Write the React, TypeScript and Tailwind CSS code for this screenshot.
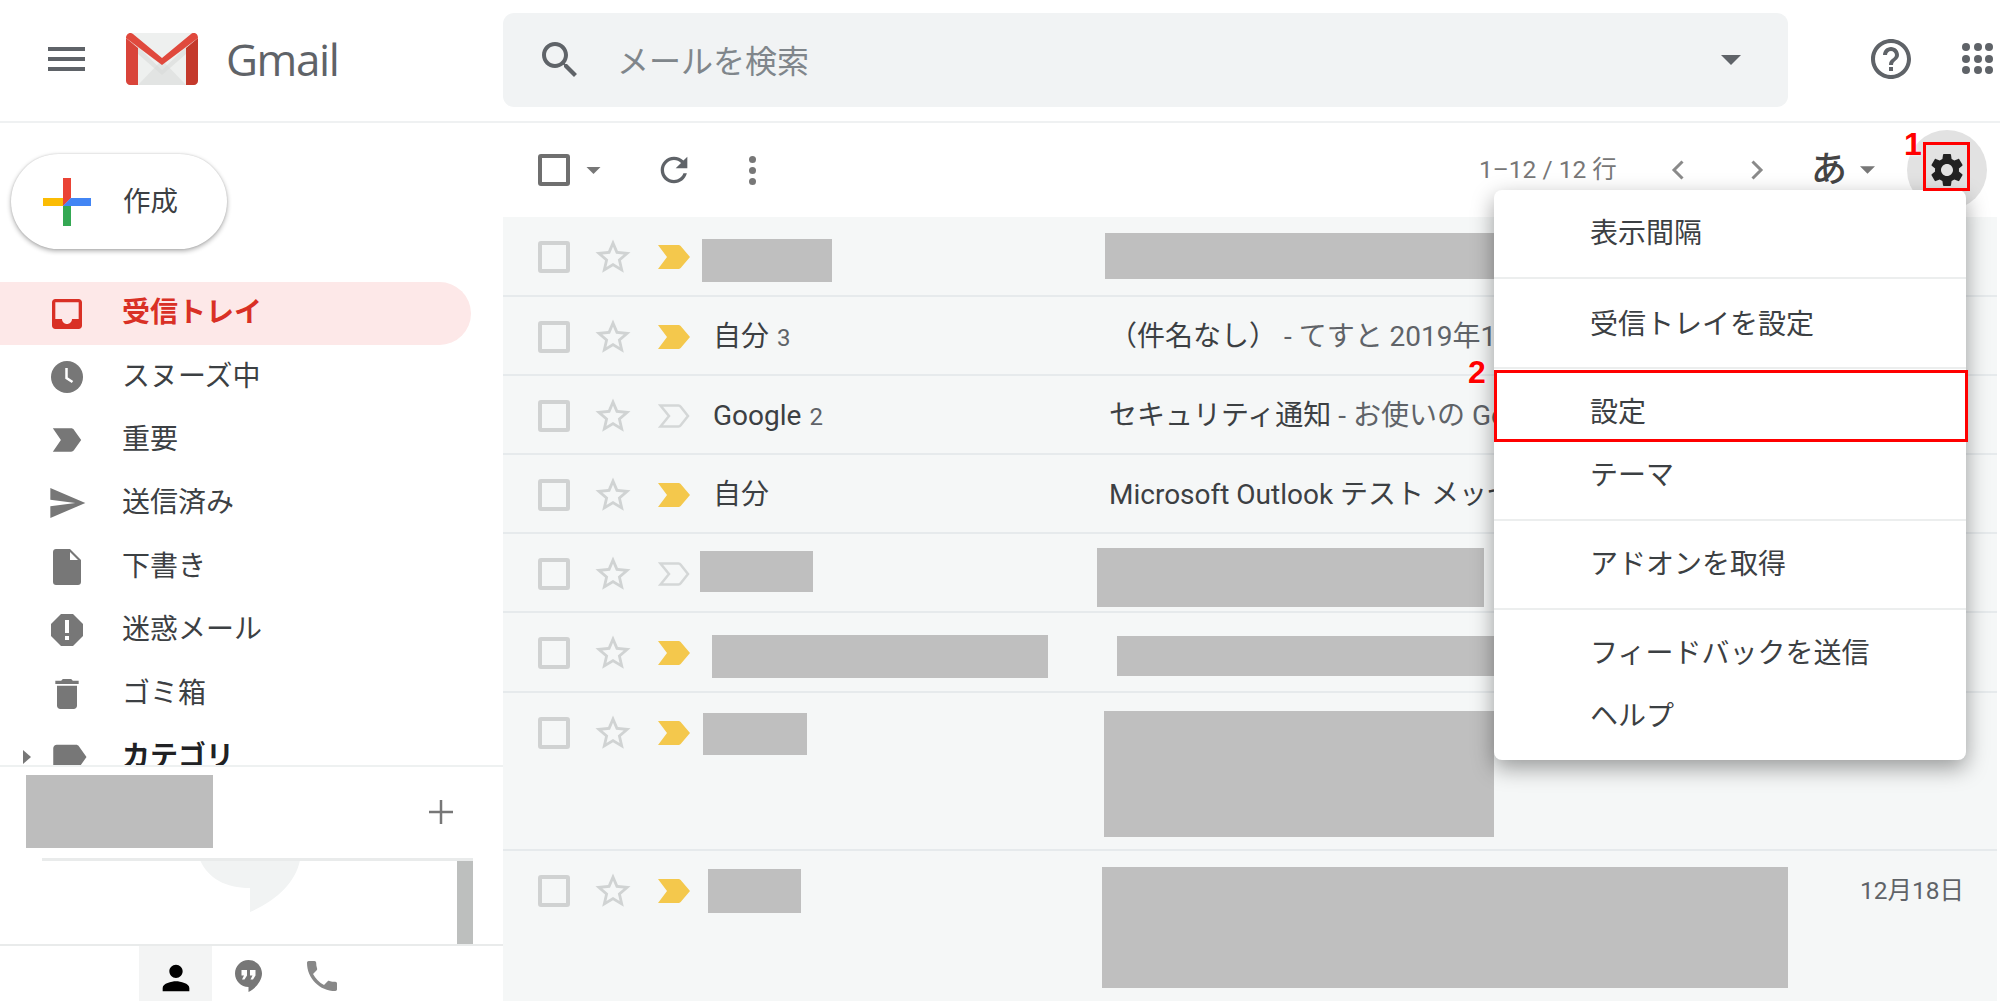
const font = "font-['Roboto','Noto_Sans_CJK_JP',sans-serif]";

function Icon({ d, className }: { d: string; className?: string }) {
  return (
    <svg viewBox="0 0 24 24" fill="currentColor" className={className}>
      <path d={d} />
    </svg>
  );
}

const paths = {
  inbox: 'M19 3H4.99c-1.11 0-1.98.89-1.98 2L3 19c0 1.1.88 2 1.99 2H19c1.1 0 2-.9 2-2V5c0-1.11-.9-2-2-2zm0 12h-4c0 1.66-1.35 3-3 3s-3-1.34-3-3H4.99V5H19v10z',
  important: 'M3.5 18.99l11 .01c.67 0 1.27-.33 1.63-.84L20.5 12l-4.37-6.16c-.36-.51-.96-.84-1.63-.84l-11 .01L8.34 12 3.5 18.99z',
  send: 'M2.01 21L23 12 2.01 3 2 10l15 2-15 2z',
  trash: 'M6 19c0 1.1.9 2 2 2h8c1.1 0 2-.9 2-2V7H6v12zM19 4h-3.5l-1-1h-5l-1 1H5v2h14V4z',
  label: 'M17.63 5.84C17.27 5.33 16.67 5 16 5L5 5.01C3.9 5.01 3 5.9 3 7v10c0 1.1.9 1.99 2 1.99L16 19c.67 0 1.27-.33 1.63-.84L22 12l-4.37-6.16z',
  person: 'M12 12c2.21 0 4-1.79 4-4s-1.79-4-4-4-4 1.79-4 4 1.79 4 4 4zm0 2c-2.67 0-8 1.34-8 4v2h16v-2c0-2.66-5.33-4-8-4z',
  phone: 'M6.62 10.79c1.44 2.83 3.76 5.14 6.59 6.59l2.2-2.2c.27-.27.67-.36 1.02-.24 1.12.37 2.33.57 3.57.57.55 0 1 .45 1 1V20c0 .55-.45 1-1 1-9.39 0-17-7.61-17-17 0-.55.45-1 1-1h3.5c.55 0 1 .45 1 1 0 1.25.2 2.45.57 3.57.11.35.03.74-.25 1.02l-2.2 2.2z',
  gear: 'M19.14 12.94c.04-.3.06-.61.06-.94 0-.32-.02-.64-.07-.94l2.03-1.58c.18-.14.23-.41.12-.61l-1.92-3.32c-.12-.22-.37-.29-.59-.22l-2.39.96c-.5-.38-1.03-.7-1.62-.94l-.36-2.54c-.04-.24-.24-.41-.48-.41h-3.84c-.24 0-.43.17-.47.41l-.36 2.54c-.59.24-1.13.57-1.62.94l-2.39-.96c-.22-.08-.47 0-.59.22L2.74 8.87c-.12.21-.08.47.12.61l2.03 1.58c-.05.3-.09.63-.09.94s.02.64.07.94l-2.03 1.58c-.18.14-.23.41-.12.61l1.92 3.32c.12.22.37.29.59.22l2.39-.96c.5.38 1.03.7 1.62.94l.36 2.54c.05.24.24.41.48.41h3.84c.24 0 .44-.17.47-.41l.36-2.54c.59-.24 1.13-.56 1.62-.94l2.39.96c.22.08.47 0 .59-.22l1.92-3.32c.12-.22.07-.47-.12-.61l-2.01-1.58zM12 15.6c-1.98 0-3.6-1.62-3.6-3.6s1.62-3.6 3.6-3.6 3.6 1.62 3.6 3.6-1.62 3.6-3.6 3.6z',
  refresh: 'M17.65 6.35C16.2 4.9 14.21 4 12 4c-4.42 0-7.99 3.58-7.99 8s3.57 8 7.99 8c3.73 0 6.84-2.55 7.73-6h-2.08c-.82 2.33-3.04 4-5.65 4-3.31 0-6-2.69-6-6s2.69-6 6-6c1.66 0 3.14.69 4.22 1.78L13 11h7V4l-2.35 2.35z',
  search: 'M15.5 14h-.79l-.28-.27C15.41 12.59 16 11.11 16 9.5 16 5.91 13.09 3 9.5 3S3 5.91 3 9.5 5.91 16 9.5 16c1.61 0 3.09-.59 4.23-1.57l.27.28v.79l5 4.99L20.49 19l-4.99-5zm-6 0C7.01 14 5 11.99 5 9.5S7.01 5 9.5 5 14 7.01 14 9.5 11.99 14 9.5 14z',
  help: 'M11 18h2v-2h-2v2zm1-16C6.48 2 2 6.48 2 12s4.48 10 10 10 10-4.48 10-10S17.52 2 12 2zm0 18c-4.41 0-8-3.59-8-8s3.59-8 8-8 8 3.59 8 8-3.59 8-8 8zm0-14c-2.21 0-4 1.79-4 4h2c0-1.1.9-2 2-2s2 .9 2 2c0 2-3 1.75-3 5h2c0-2.25 3-2.5 3-5 0-2.21-1.79-4-4-4z',
  star: 'M22 9.24l-7.19-.62L12 2 9.19 8.63 2 9.24l5.46 4.73L5.82 21 12 17.27 18.18 21l-1.63-7.03L22 9.24zM12 15.4l-3.76 2.27 1-4.28-3.32-2.88 4.38-.38L12 6.1l1.71 4.04 4.38.38-3.32 2.88 1 4.28L12 15.4z',
};

function Caret({ className }: { className: string }) {
  return (
    <svg viewBox="0 0 10 5" fill="currentColor" className={className}>
      <path d="M0 0h10L5 5z" />
    </svg>
  );
}

function GmailLogo() {
  return (
    <svg viewBox="0 0 72 52" className="h-[52px] w-[72px]">
      <rect x="2" y="0" width="68" height="52" rx="3" fill="#eef0ef" />
      <path d="M12 52 36 27l24 25z" fill="#e2e4e3" />
      <path d="M12 14 36 37l24-23v7L36 42 12 21z" fill="#d9dad9" opacity="0.6" />
      <path d="M0 5c0-4 4-6.500 7-4l29 24L65 1c3-2.500 7-.5 7 4L36 32z" fill="#e0493d" />
      <path d="M0 5l12 10v37H4c-2 0-4-2-4-4z" fill="#d9443a" />
      <path d="M72 5 60 15v37h8c2 0 4-2 4-4z" fill="#c4392b" />
    </svg>
  );
}

function ComposePlus() {
  return (
    <svg viewBox="0 0 48 48" className="h-12 w-12">
      <path d="M20 0h8v20l-8 0z" fill="#ea4335" />
      <path d="M28 20h20v8H20z" fill="#4285f4" />
      <path d="M20 28h8v20h-8z" fill="#34a853" />
      <path d="M0 20h20v8H0z" fill="#fbbc04" />
      <path d="M20 20h8l-8 8z" fill="#ea4335" />
      <path d="M28 20v8h-8z" fill="#4285f4" />
    </svg>
  );
}

const navItems = [
  { label: 'スヌーズ中', icon: <svg viewBox="0 0 32 32" className="h-8 w-8"><circle cx="16" cy="16" r="16" fill="#777" /><path d="M15.500 7v10l6 4" fill="none" stroke="#fff" strokeWidth="2.500" /></svg> },
  { label: '重要', icon: <Icon d={paths.important} className="h-10 w-10 shrink-0 text-[#777]" /> },
  { label: '送信済み', icon: <Icon d={paths.send} className="h-10 w-10 shrink-0 text-[#777]" /> },
  { label: '下書き', icon: <svg viewBox="0 0 32 36" className="h-9 w-8"><path d="M6 0h13l11 11v22c0 1.700-1.300 3-3 3H5c-1.700 0-3-1.300-3-3V3c0-1.700 1.300-3 3-3z" fill="#777" /><path d="M19 3v8h8z" fill="#fff" /></svg> },
  { label: '迷惑メール', icon: <svg viewBox="0 0 32 32" className="h-8 w-8"><path d="M10 0h12l10 10v12L22 32H10L0 22V10z" fill="#777" /><path d="M14 6h4v13h-4zM14 22h4v4h-4z" fill="#fff" /></svg> },
  { label: 'ゴミ箱', icon: <Icon d={paths.trash} className="h-10 w-10 shrink-0 text-[#777]" /> },
];

const rows = [
  {
    h: 'h-[80px] border-b-2',
    boxes: ['left-[199px] top-[22px] h-[43px] w-[130px]', 'left-[602px] top-[16px] h-[46px] w-[400px]'],
    important: true,
  },
  { h: 'h-[79px] border-b-2', important: true, sender: '自分', count: '3', subject: '（件名なし）', snippet: ' - てすと 2019年12月' },
  { h: 'h-[79px] border-b-2', important: false, sender: 'Google', count: '2', subject: 'セキュリティ通知', snippet: ' - お使いの Google' },
  { h: 'h-[79px] border-b-2', important: true, sender: '自分', subject: 'Microsoft Outlook テスト メッセージ' },
  {
    h: 'h-[79px] border-b-2',
    boxes: ['left-[197px] top-[17px] h-[41px] w-[113px]', 'left-[594px] top-[14px] h-[59px] w-[387px]'],
    important: false,
  },
  {
    h: 'h-[80px] border-b-2',
    boxes: ['left-[209px] top-[22px] h-[43px] w-[336px]', 'left-[614px] top-[23px] h-[40px] w-[400px]'],
    important: true,
  },
  {
    h: 'h-[158px] border-b-2',
    boxes: ['left-[200px] top-[20px] h-[42px] w-[104px]', 'left-[601px] top-[18px] h-[126px] w-[390px]'],
    important: true,
  },
  {
    h: 'flex-1',
    boxes: ['left-[205px] top-[18px] h-[44px] w-[93px]', 'left-[599px] top-[16px] h-[121px] w-[686px]'],
    important: true,
    date: '12月18日',
  },
];

const menuGroups = [
  { cls: 'pt-[12px] pb-[12px]', items: ['表示間隔'] },
  { cls: 'pt-[14px] pb-[11px]', items: ['受信トレイを設定'] },
  { cls: 'pt-[12px] pb-[12px]', items: ['設定', 'テーマ'] },
  { cls: 'pt-[12px] pb-[12px]', items: ['アドオンを取得'] },
  { cls: 'pt-[12px] pb-[12px]', items: ['フィードバックを送信', 'ヘルプ'] },
];

function Row({ row }: { row: (typeof rows)[number] }) {
  return (
    <div className={`relative flex shrink-0 items-start overflow-hidden border-[#e6eaec] bg-[#f5f7f7] pl-[35px] pt-6 ${row.h}`}>
      <div className="h-8 w-8 rounded-[3px] border-4 border-[#d0d2d2]" />
      <Icon d={paths.star} className="ml-[22px] h-[42px] w-[42px] -mt-[5px] text-[#d0d3d3]" />
      <div className="ml-[24px] h-8 w-8">
        <svg viewBox="0 0 32 24" className="mt-1 h-6 w-8">
          {row.important ? (
            <path d="M0 24 9 12 0 0h20c1.500 0 2.500.5 3.500 2L32 12l-8.500 10c-1 1.500-2 2-3.500 2z" fill="#f4c84c" />
          ) : (
            <path d="M2.500 22.500 11 12 2.500 1.500h18c1 0 1.600.4 2.200 1.200L30 12l-7.300 9.300c-.6.800-1.200 1.200-2.200 1.200z" fill="none" stroke="#d4d7d7" strokeWidth="2.500" />
          )}
        </svg>
      </div>
      <div className="ml-[23px] w-[396px] shrink-0 text-[28px] leading-8 text-[#3c4043]">
        {row.sender}
        {row.count && <span className="ml-2 text-[24px] text-[#5f6368]">{row.count}</span>}
      </div>
      <div className="min-w-0 flex-1 whitespace-nowrap text-[28px] leading-8 text-[#3c4043]">
        {row.subject}
        {row.snippet && <span className="text-[#5f6368]">{row.snippet}</span>}
      </div>
      {row.date && <span className="mr-[33px] text-[24.500px] leading-8 text-[#5f6368]">{row.date}</span>}
      {row.boxes?.map((box) => (
        <div key={box} className={`absolute bg-[#bfbfbf] ${box}`} />
      ))}
    </div>
  );
}

export default function App() {
  return (
    <div className={`relative flex h-screen w-full flex-col overflow-hidden bg-white ${font}`}>
      {/* Top bar */}
      <header className="flex h-[123px] shrink-0 items-start border-b-2 border-[#eff1f2]">
        <div className="flex w-[503px] shrink-0 items-center pt-[33px]">
          <div className="ml-12 flex h-[24px] w-[37px] flex-col justify-between">
            <span className="h-1 bg-[#5f6368]" />
            <span className="h-1 bg-[#5f6368]" />
            <span className="h-1 bg-[#5f6368]" />
          </div>
          <div className="ml-[41px]">
            <GmailLogo />
          </div>
          <span className="ml-[28px] font-['Open_Sans'] text-[44px] leading-[52px] tracking-[-1.400px] text-[#5f6368]">Gmail</span>
        </div>
        <div className="mt-[13px] flex h-[94px] w-[1285px] items-center rounded-[11px] bg-[#f1f3f4]">
          <Icon d={paths.search} className="ml-[33px] h-[48px] w-[48px] text-[#5f6368]" />
          <span className="ml-[33px] mt-1 text-[32px] text-[#80868b]">メールを検索</span>
          <Caret className="ml-auto mr-[47px] h-[10px] w-5 text-[#5f6368]" />
        </div>
        <Icon d={paths.help} className="ml-[79px] mt-[35px] h-[48px] w-[48px] text-[#5f6368]" />
        <div className="ml-[47px] mt-[43px] grid h-8 w-8 grid-cols-3 gap-[3px]">
          {Array.from({ length: 9 }).map((_, i) => (
            <span key={i} className="h-2 w-2 rounded-full bg-[#5f6368]" />
          ))}
        </div>
      </header>

      <div className="flex min-h-0 flex-1">
        {/* Left column */}
        <aside className="flex w-[503px] shrink-0 flex-col">
          <div className="min-h-0 flex-1 overflow-hidden">
            <div className="ml-[11px] mt-[31px] flex h-[95px] w-[216px] items-center rounded-full bg-white pl-8 shadow-[0_2px_5px_rgba(0,0,0,0.32),0_0_2px_rgba(0,0,0,0.15)]">
              <ComposePlus />
              <span className="ml-8 text-[27.500px] text-[#3c4043]">作成</span>
            </div>
            <nav className="mt-[33px]">
              <div className="flex h-[63px] w-[471px] items-center rounded-r-full bg-[#fde8e8] pl-[47px] text-[28px] font-bold text-[#d93025]">
                <Icon d={paths.inbox} className="h-10 w-10 text-[#d93025]" />
                <span className="ml-[35px] -mt-[2px]">受信トレイ</span>
              </div>
              {navItems.map((item) => (
                <div key={item.label} className="flex h-[63.400px] items-center text-[28px] text-[#3c4043]">
                  <span className="ml-[51px] flex w-8 justify-center">{item.icon}</span>
                  <span className="ml-[39px]">{item.label}</span>
                </div>
              ))}
              <div className="flex h-[63.400px] items-center text-[28px] font-bold text-[#202124]">
                <svg viewBox="0 0 8 14" className="ml-[23px] h-[14px] w-2 text-[#777]" fill="currentColor">
                  <path d="M0 0l8 7-8 7z" />
                </svg>
                <Icon d={paths.label} className="ml-[17px] h-[42px] w-[42px] text-[#777]" />
                <span className="ml-[32px]">カテゴリ</span>
              </div>
            </nav>
          </div>

          {/* Hangouts */}
          <div className="flex h-[179px] shrink-0 flex-col border-t-2 border-[#eef1f1]">
            <div className="flex h-[91px] items-start pl-[26px] pt-2">
              <div className="h-[73px] w-[187px] bg-[#bdbdbd]" />
              <svg viewBox="0 0 24 24" className="ml-[216px] mt-[25px] h-6 w-6 text-[#777]" fill="currentColor">
                <path d="M10.750 0h2.500v10.750H24v2.500H13.250V24h-2.500V13.250H0v-2.500h10.750z" />
              </svg>
            </div>
            <div className="relative ml-[42px] flex h-[86px] w-[431px] justify-end overflow-hidden border-t-[3px] border-[#e9ebeb]">
              <svg viewBox="0 0 100 52" className="absolute left-[158px] top-[-1px] h-[52px] w-[100px]">
                <path d="M0 0h100c-4 22-24 41-50 52V28C25 28 8 18 0 0z" fill="#f1f3f3" />
              </svg>
              <div className="w-4 bg-[#bdbfbe]" />
            </div>
          </div>
          <div className="flex h-[57px] shrink-0 border-t-2 border-[#e9ebeb] pl-[139px]">
            <div className="flex w-[73px] items-center justify-center bg-[#f3f4f4] pt-1">
              <Icon d={paths.person} className="mt-1 h-10 w-10 text-black" />
            </div>
            <div className="flex w-[73px] items-center justify-center pt-1">
              <svg viewBox="0 0 27 32" className="h-8 w-[27px]">
                <path d="M13.500 0C6 0 0 6 0 13.500S6 27 13.500 27v5C20 29 27 21 27 13.500 27 6 21 0 13.500 0z" fill="#777" />
                <path d="M6.500 10h5.500v5.500l-2.500 4H7l2-4H6.500zM15 10h5.500v5.500l-2.500 4h-2.500l2-4H15z" fill="#fff" />
              </svg>
            </div>
            <div className="flex w-[73px] items-center justify-center pt-1">
              <Icon d={paths.phone} className="h-10 w-10 text-[#888]" />
            </div>
          </div>
        </aside>

        {/* Message list */}
        <main className="flex min-w-0 flex-1 flex-col pr-[3px]">
          <div className="flex h-[94px] shrink-0 items-center pl-[35px]">
            <div className="h-8 w-8 rounded-[3px] border-4 border-[#6f6f6f]" />
            <Caret className="ml-4 h-[7px] w-[15px] text-[#777]" />
            <Icon d={paths.refresh} className="ml-[53px] h-[40px] w-[40px] text-[#5f6368]" />
            <div className="ml-[55px] flex flex-col gap-[4px]">
              <span className="h-[7px] w-[7px] rounded-full bg-[#777]" />
              <span className="h-[7px] w-[7px] rounded-full bg-[#777]" />
              <span className="h-[7px] w-[7px] rounded-full bg-[#777]" />
            </div>
            <span className="ml-[723px] w-[140px] whitespace-nowrap text-[24.500px] text-[#777]">1–12 / 12 行</span>
            <svg viewBox="0 0 13 20" className="ml-[52px] h-5 w-[13px]" fill="none" stroke="#8a8a8a" strokeWidth="3">
              <path d="M11.500 1.500 3 10l8.500 8.500" />
            </svg>
            <svg viewBox="0 0 13 20" className="ml-[67px] h-5 w-[13px]" fill="none" stroke="#8a8a8a" strokeWidth="3">
              <path d="M1.500 1.500 10 10l-8.500 8.500" />
            </svg>
            <span className="ml-[47px] text-[36px] font-medium text-[#444]">あ</span>
            <Caret className="ml-[13px] h-[8px] w-[15px] text-[#777]" />
            <div className="ml-[32px] flex h-[80px] w-[80px] items-center justify-center rounded-full bg-[#e2e2e2]">
              <Icon d={paths.gear} className="h-10 w-10 text-[#222]" />
            </div>
          </div>
          {rows.map((row, i) => (
            <Row key={i} row={row} />
          ))}
        </main>
      </div>

      {/* Settings menu */}
      <div className="absolute left-[1494px] top-[190px] w-[472px] rounded-[8px] bg-white text-[28px] text-[#3c4043] shadow-[0_8px_22px_rgba(0,0,0,0.38)]">
        {menuGroups.map((group, i) => (
          <div key={i} className={`${group.cls} ${i > 0 ? 'border-t-2 border-[#eceeee]' : ''}`}>
            {group.items.map((item) => (
              <div key={item} className="flex h-[63px] items-center pl-[96px]">{item}</div>
            ))}
          </div>
        ))}
      </div>

      {/* Annotations */}
      <div className="absolute left-[1923px] top-[142px] h-[49px] w-[47px] border-[3px] border-[#f00]" />
      <div className="absolute left-[1494px] top-[370px] h-[72px] w-[474px] border-[3px] border-[#f00]" />
      <span className="absolute left-[1904px] top-[126px] font-['Liberation_Sans'] text-[32px] font-bold leading-[36px] text-[#f00] [text-shadow:0_0_3px_white]">1</span>
      <span className="absolute left-[1468px] top-[354px] font-['Liberation_Sans'] text-[32px] font-bold leading-[36px] text-[#f00] [text-shadow:0_0_3px_white]">2</span>
    </div>
  );
}
